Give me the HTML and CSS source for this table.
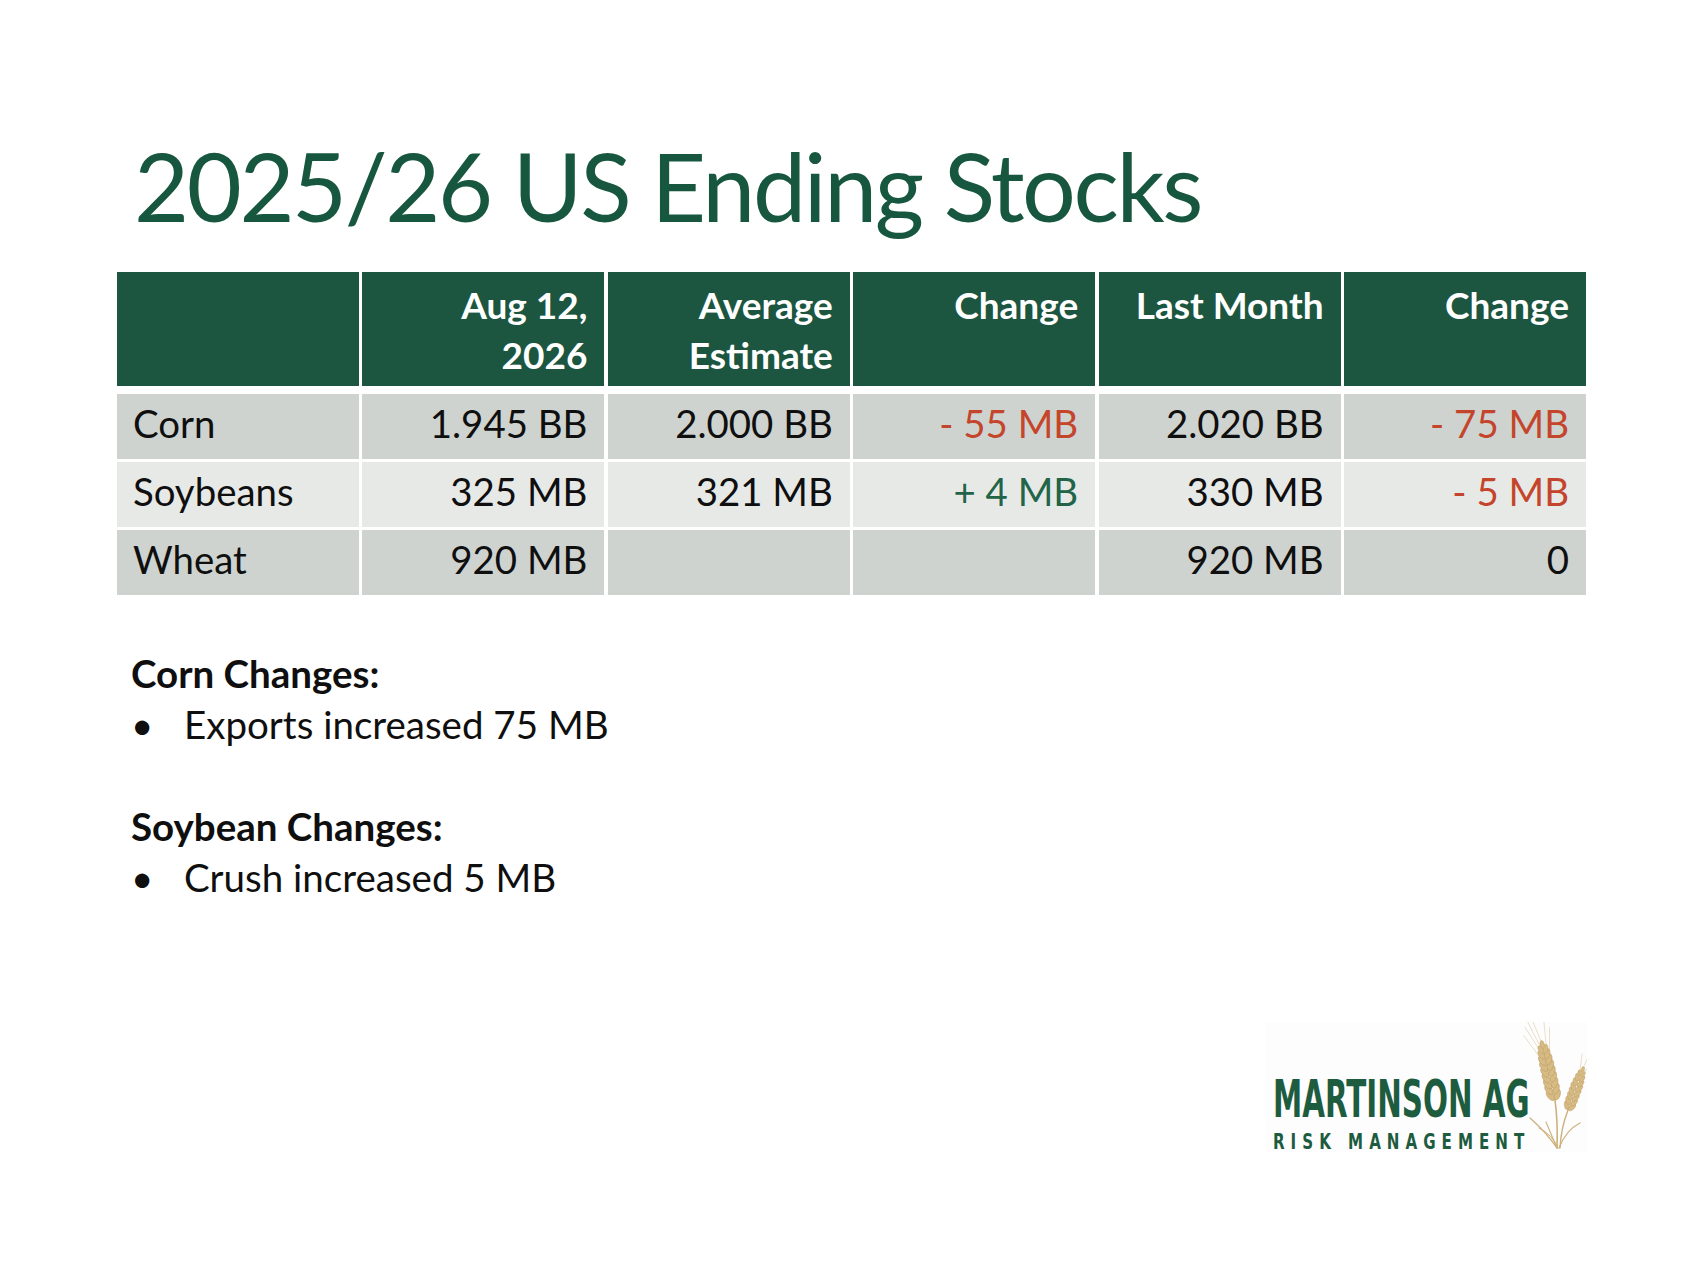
FILE: index.html
```html
<!DOCTYPE html>
<html lang="en">
<head>
<meta charset="utf-8">
<title>2025/26 US Ending Stocks</title>
<link rel="stylesheet" href="styles.css">
</head>
<body>
<div class="slide">
  <h1 class="title">2025/26 US Ending Stocks</h1>

  <div class="stocks">
    <div class="head"></div>
    <div class="head">Aug 12,<br>2026</div>
    <div class="head">Average<br>Estimate</div>
    <div class="head">Change</div>
    <div class="head">Last Month</div>
    <div class="head">Change</div>

    <div class="cell odd name">Corn</div>
    <div class="cell odd">1.945 BB</div>
    <div class="cell odd">2.000 BB</div>
    <div class="cell odd neg">- 55 MB</div>
    <div class="cell odd">2.020 BB</div>
    <div class="cell odd neg">- 75 MB</div>

    <div class="cell even name">Soybeans</div>
    <div class="cell even">325 MB</div>
    <div class="cell even">321 MB</div>
    <div class="cell even pos">+ 4 MB</div>
    <div class="cell even">330 MB</div>
    <div class="cell even neg">- 5 MB</div>

    <div class="cell odd name">Wheat</div>
    <div class="cell odd">920 MB</div>
    <div class="cell odd"></div>
    <div class="cell odd"></div>
    <div class="cell odd">920 MB</div>
    <div class="cell odd">0</div>
  </div>

  <div class="notes">
    <h2>Corn Changes:</h2>
    <ul>
      <li><span class="bullet">•</span><span>Exports increased 75 MB</span></li>
    </ul>
    <div class="spacer"></div>
    <h2>Soybean Changes:</h2>
    <ul>
      <li><span class="bullet">•</span><span>Crush increased 5 MB</span></li>
    </ul>
  </div>

  <div class="footer">
    <svg class="logo" viewBox="0 0 322 140" width="322" height="140" xmlns="http://www.w3.org/2000/svg">
      <defs>
        <ellipse id="gr" cx="0" cy="0" rx="3" ry="5.6" fill="#d6bb84" stroke="#bf9d62" stroke-width="0.6"/>
      </defs>
      <rect x="0" y="0" width="322" height="130" fill="#fdfdfd"/>
      <text class="logo-main" transform="translate(8,95) scale(0.62,1)" x="0" y="0" textLength="414" lengthAdjust="spacingAndGlyphs">MARTINSON AG</text>
      <text class="logo-sub" transform="translate(8,127) scale(0.72,1)" x="0" y="0" textLength="349" lengthAdjust="spacing">RISK MANAGEMENT</text>

      <g fill="none" stroke="#cdb17c" stroke-linecap="round">
        <path d="M290,78 Q293,100 292,126" stroke-width="1.6"/>
        <path d="M303,88 Q296,106 295,126" stroke-width="1.4"/>
        <path d="M292,126 Q281,110 265,96" stroke-width="1.3"/>
        <path d="M292,126 Q286,112 281,100" stroke-width="1.1"/>
        <path d="M294,126 Q301,108 315,101" stroke-width="1.2"/>
        <path d="M293,126 Q288,113 274,106" stroke-width="1"/>
      </g>

      <g transform="translate(290,78) rotate(-13)">
        <g stroke="#d9c49a" stroke-width="0.6" fill="none" opacity="0.8">
          <path d="M-3,-50 L-13,-78"/>
          <path d="M0,-58 L-4,-82"/>
          <path d="M3,-50 L7,-80"/>
          <path d="M-4,-42 L-16,-70"/>
          <path d="M4,-42 L11,-72"/>
          <path d="M-2,-54 L-9,-82"/>
        </g>
        <use href="#gr" transform="translate(-3.4,-5) rotate(-28)"/>
        <use href="#gr" transform="translate(3.4,-5) rotate(28)"/>
        <use href="#gr" transform="translate(-3.6,-11) rotate(-28)"/>
        <use href="#gr" transform="translate(3.6,-11) rotate(28)"/>
        <use href="#gr" transform="translate(-3.6,-17) rotate(-28)"/>
        <use href="#gr" transform="translate(3.6,-17) rotate(28)"/>
        <use href="#gr" transform="translate(-3.6,-23) rotate(-28)"/>
        <use href="#gr" transform="translate(3.6,-23) rotate(28)"/>
        <use href="#gr" transform="translate(-3.6,-29) rotate(-28)"/>
        <use href="#gr" transform="translate(3.6,-29) rotate(28)"/>
        <use href="#gr" transform="translate(-3.4,-35) rotate(-28)"/>
        <use href="#gr" transform="translate(3.4,-35) rotate(28)"/>
        <use href="#gr" transform="translate(-3.2,-41) rotate(-26)"/>
        <use href="#gr" transform="translate(3.2,-41) rotate(26)"/>
        <use href="#gr" transform="translate(-2.8,-47) rotate(-22) scale(0.9)"/>
        <use href="#gr" transform="translate(2.8,-47) rotate(22) scale(0.9)"/>
        <use href="#gr" transform="translate(-2.2,-52) rotate(-18) scale(0.8)"/>
        <use href="#gr" transform="translate(2.2,-52) rotate(18) scale(0.8)"/>
        <use href="#gr" transform="translate(0,-57) scale(0.7)"/>
      </g>

      <g transform="translate(303,88) rotate(20)">
        <g stroke="#d9c49a" stroke-width="0.6" fill="none" opacity="0.8">
          <path d="M-2,-40 L-6,-58"/>
          <path d="M0,-45 L1,-62"/>
          <path d="M2,-40 L8,-58"/>
        </g>
        <use href="#gr" transform="translate(-2.8,-4) rotate(-28) scale(0.8)"/>
        <use href="#gr" transform="translate(2.8,-4) rotate(28) scale(0.8)"/>
        <use href="#gr" transform="translate(-3,-9) rotate(-28) scale(0.8)"/>
        <use href="#gr" transform="translate(3,-9) rotate(28) scale(0.8)"/>
        <use href="#gr" transform="translate(-3,-14) rotate(-28) scale(0.8)"/>
        <use href="#gr" transform="translate(3,-14) rotate(28) scale(0.8)"/>
        <use href="#gr" transform="translate(-3,-19) rotate(-28) scale(0.8)"/>
        <use href="#gr" transform="translate(3,-19) rotate(28) scale(0.8)"/>
        <use href="#gr" transform="translate(-3,-24) rotate(-28) scale(0.8)"/>
        <use href="#gr" transform="translate(3,-24) rotate(28) scale(0.8)"/>
        <use href="#gr" transform="translate(-2.8,-29) rotate(-26) scale(0.75)"/>
        <use href="#gr" transform="translate(2.8,-29) rotate(26) scale(0.75)"/>
        <use href="#gr" transform="translate(-2.4,-34) rotate(-22) scale(0.7)"/>
        <use href="#gr" transform="translate(2.4,-34) rotate(22) scale(0.7)"/>
        <use href="#gr" transform="translate(-1.8,-38.5) rotate(-18) scale(0.6)"/>
        <use href="#gr" transform="translate(1.8,-38.5) rotate(18) scale(0.6)"/>
        <use href="#gr" transform="translate(0,-43) scale(0.55)"/>
      </g>
    </svg>
  </div>
</div>
</body>
</html>
```

FILE: styles.css
```css
* {
  box-sizing: border-box;
}

body {
  margin: 0;
  background: #ffffff;
  font-family: Lato, "Open Sans", "Noto Sans", sans-serif;
  color: #0f0f0f;
}

.slide {
  width: 1707px;
  height: 1280px;
  display: flex;
  flex-direction: column;
  overflow: hidden;
}

.title {
  margin: 137px 0 0 134px;
  font-size: 95px;
  line-height: 97px;
  font-weight: 400;
  letter-spacing: -2.4px;
  color: #17573f;
}

.stocks {
  margin: 38px 0 0 117px;
  display: grid;
  grid-template-columns: repeat(6, 242px);
  column-gap: 3.4px;
  row-gap: 3px;
  width: max-content;
}

.head {
  height: 114px;
  margin-bottom: 5px;
  padding: 8px 17px 0 16px;
  background: #1c5640;
  color: #ffffff;
  font-weight: 700;
  font-size: 37px;
  line-height: 50px;
  text-align: right;
}

.cell {
  height: 65px;
  padding: 4px 17px 0 16px;
  font-size: 38.4px;
  line-height: 50px;
  text-align: right;
  white-space: nowrap;
}

.odd {
  background: #ced3cf;
}

.even {
  background: #e7e9e7;
}

.name {
  text-align: left;
}

.neg {
  color: #c4452b;
}

.pos {
  color: #226447;
}

.notes {
  margin: 53px 0 0 131px;
  font-size: 38.5px;
  line-height: 51px;
}

.notes h2 {
  margin: 0;
  font-size: inherit;
  font-weight: 700;
  line-height: 51px;
}

.notes ul {
  list-style: none;
  margin: 0;
  padding: 0;
}

.notes li {
  display: flex;
}

.bullet {
  width: 53px;
  flex: none;
}

.spacer {
  height: 51px;
}

.footer {
  margin-top: auto;
  padding: 0 120px 118px 0;
  display: flex;
  justify-content: flex-end;
}

.logo {
  display: block;
  width: 322px;
  height: 140px;
}

.logo-main {
  font-family: "DejaVu Sans", sans-serif;
  font-weight: 700;
  font-size: 51px;
  fill: #1d5c3f;
}

.logo-sub {
  font-family: "DejaVu Sans", sans-serif;
  font-weight: 700;
  font-size: 21px;
  fill: #1d5c3f;
}
```
